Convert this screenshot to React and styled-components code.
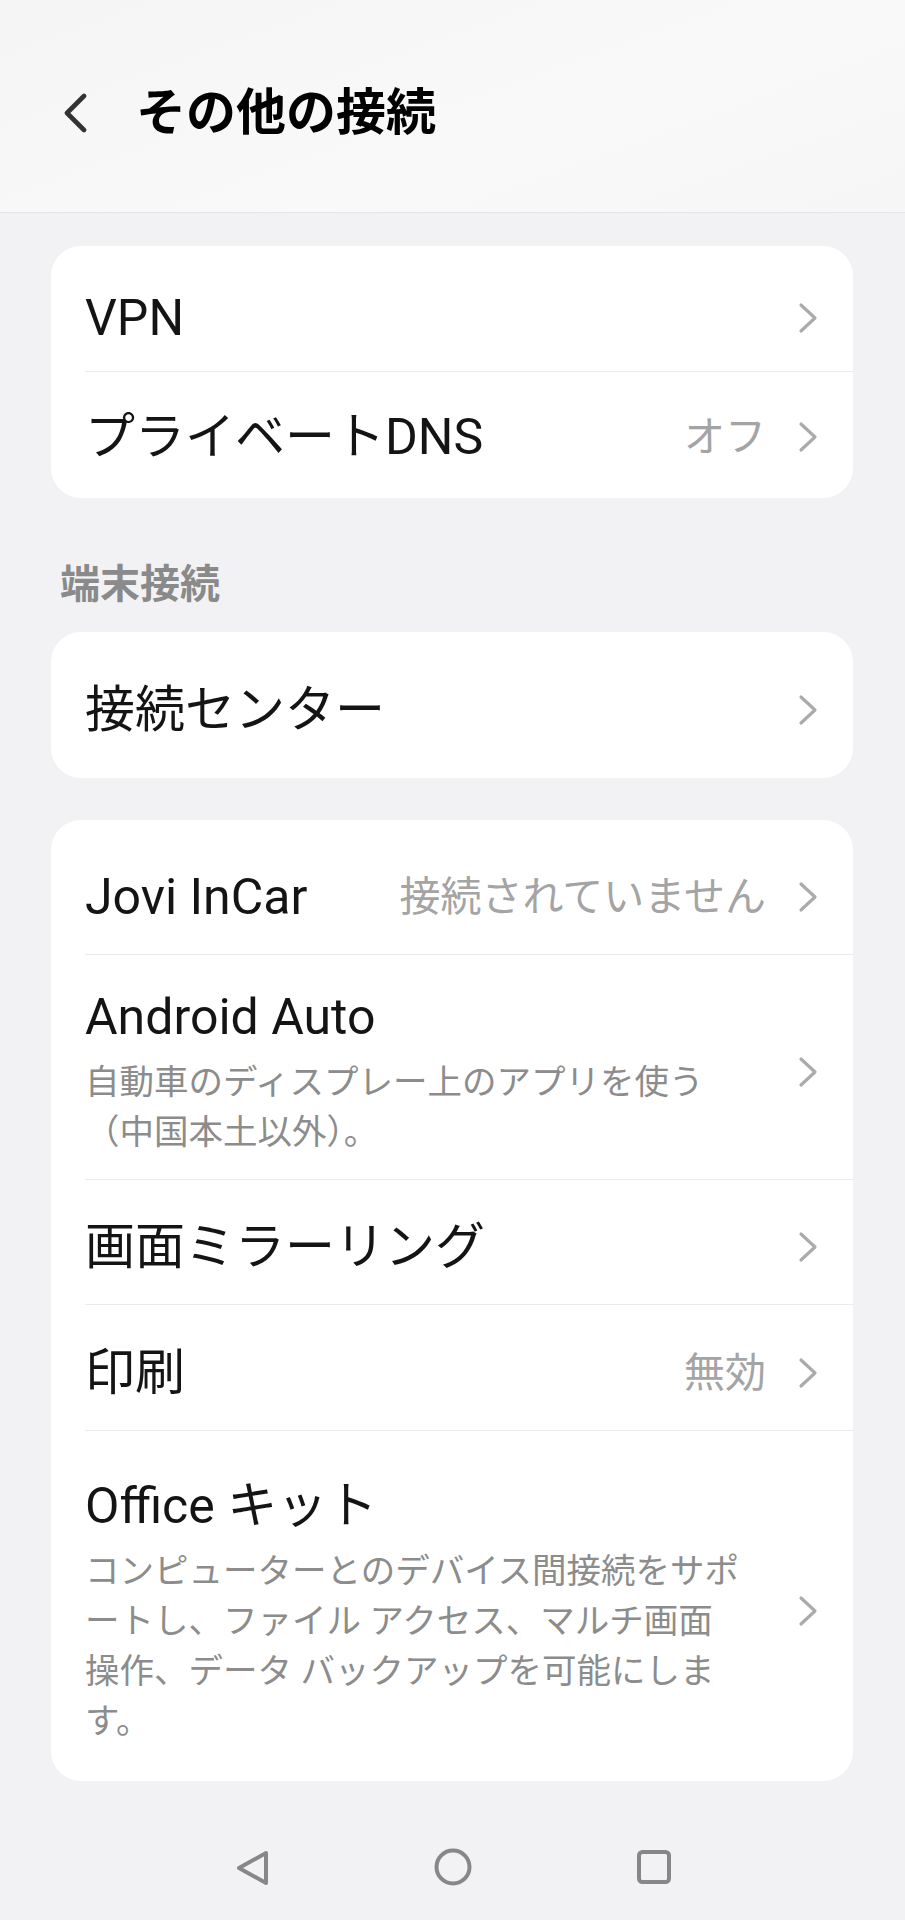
import styled, { createGlobalStyle } from 'styled-components';

const GlobalStyle = createGlobalStyle`
  html, body {
    margin: 0;
    padding: 0;
    background: #f2f2f4;
  }
  body {
    font-family: Roboto, "Noto Sans CJK JP", sans-serif;
    color: #141414;
  }
`;

const Page = styled.div`
  width: 905px;
  min-height: 1920px;
  display: flex;
  flex-direction: column;
  background: #f2f2f4;
`;

const Header = styled.header`
  height: 213px;
  display: flex;
  align-items: center;
  padding: 14px 0 0 63px;
  box-sizing: border-box;
  background: linear-gradient(160deg, #f5f5f5, #f9f9f9 60%, #f6f6f6);
  border-bottom: 1px solid #e6e6e8;
`;

const Title = styled.h1`
  margin: 0 0 0 47px;
  font-size: 50px;
  line-height: 60px;
  font-weight: 700;
  color: #000;
`;

const Main = styled.main`
  display: flex;
  flex-direction: column;
  padding: 33px 52px 0 51px;
`;

const Card = styled.section.attrs(props => ({
  $pad: props.$pad || '0',
  $mb: props.$mb || '0',
}))`
  background: #fff;
  border-radius: 30px;
  padding: ${props => props.$pad};
  margin-bottom: ${props => props.$mb};
  overflow: hidden;
`;

const Row = styled.div.attrs(props => ({
  $h: props.$h || '124px',
}))`
  height: ${props => props.$h};
  display: flex;
  align-items: center;
  padding: 10px 35px 0 34px;
  box-sizing: border-box;
`;

const RowText = styled.div`
  flex: 1;
  display: flex;
  flex-direction: column;
  min-width: 0;
`;

const ItemTitle = styled.div`
  font-size: 50px;
  line-height: 60px;
  color: #141414;
  white-space: nowrap;
`;

const Subtitle = styled.div`
  margin-top: 10px;
  font-size: 34.5px;
  line-height: 50px;
  color: #8c8c8c;
  white-space: nowrap;
`;

const Value = styled.span`
  margin-right: 32px;
  font-size: 41px;
  line-height: 50px;
  color: #a4a4a4;
  white-space: nowrap;
`;

const Divider = styled.div`
  height: 1px;
  margin-left: 34px;
  background: #ebebeb;
`;

const SectionLabel = styled.h2`
  margin: 0;
  padding: 59px 0 19px 9px;
  font-size: 40px;
  line-height: 56px;
  font-weight: 700;
  color: #8a8a8a;
`;

const NavBar = styled.nav`
  flex: 1;
  display: flex;
  justify-content: center;
  align-items: flex-start;
  gap: 161px;
  padding: 66px 0 0 0;
`;

const BackIcon = () => (
  <svg width="26" height="40" viewBox="0 0 26 40" fill="none">
    <polyline
      points="21,3 4,20 21,37"
      stroke="#333"
      strokeWidth="4.6"
      strokeLinecap="round"
      strokeLinejoin="round"
    />
  </svg>
);

const Chevron = () => (
  <svg width="20" height="32" viewBox="0 0 20 32" fill="none" style={{ flexShrink: 0 }}>
    <polyline
      points="3,3 17,16 3,29"
      stroke="#ababab"
      strokeWidth="3.2"
      strokeLinecap="round"
      strokeLinejoin="round"
    />
  </svg>
);

const NavBack = () => (
  <svg width="40" height="40" viewBox="0 0 40 40" fill="none">
    <path d="M7 21 L34 6 L34 36 Z" stroke="#878787" strokeWidth="4" strokeLinejoin="round" />
  </svg>
);

const NavHome = () => (
  <svg width="40" height="40" viewBox="0 0 40 40" fill="none">
    <circle cx="20" cy="20" r="16.5" stroke="#878787" strokeWidth="4" />
  </svg>
);

const NavRecent = () => (
  <svg width="40" height="40" viewBox="0 0 40 40" fill="none">
    <rect x="5" y="5" width="30" height="30" rx="3.5" stroke="#878787" strokeWidth="4" />
  </svg>
);

const Item = ({ title, value, sub, h }) => (
  <Row $h={h}>
    <RowText>
      <ItemTitle>{title}</ItemTitle>
      {sub && <Subtitle>{sub}</Subtitle>}
    </RowText>
    {value && <Value>{value}</Value>}
    <Chevron />
  </Row>
);

export default function App() {
  return (
    <Page>
      <GlobalStyle />
      <Header>
        <BackIcon />
        <Title>その他の接続</Title>
      </Header>

      <Main>
        <Card $pad="8px 0 6px">
          <Item title="VPN" h="117px" />
          <Divider />
          <Item title="プライベートDNS" value="オフ" h="120px" />
        </Card>

        <SectionLabel>端末接続</SectionLabel>

        <Card $mb="42px">
          <Item title="接続センター" h="146px" />
        </Card>

        <Card $pad="10px 0 0">
          <Item title="Jovi InCar" value="接続されていません" h="124px" />
          <Divider />
          <Item
            title="Android Auto"
            h="224px"
            sub={
              <>
                自動車のディスプレー上のアプリを使う
                <br />
                （中国本土以外）。
              </>
            }
          />
          <Divider />
          <Item title="画面ミラーリング" h="124px" />
          <Divider />
          <Item title="印刷" value="無効" h="125px" />
          <Divider />
          <Item
            title="Office キット"
            h="350px"
            sub={
              <>
                コンピューターとのデバイス間接続をサポ
                <br />
                ートし、ファイル アクセス、マルチ画面
                <br />
                操作、データ バックアップを可能にしま
                <br />
                す。
              </>
            }
          />
        </Card>
      </Main>

      <NavBar>
        <NavBack />
        <NavHome />
        <NavRecent />
      </NavBar>
    </Page>
  );
}
